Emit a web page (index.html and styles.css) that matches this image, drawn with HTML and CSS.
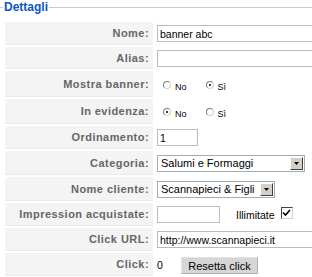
FILE: index.html
```html
<!DOCTYPE html>
<html lang="it">
  <head>
    <meta charset="utf-8" />
    <title>Banner - Dettagli</title>
    <link rel="stylesheet" href="styles.css">
  </head>
  <body>
    <fieldset class="adminform">
      <legend>Dettagli</legend>
      <div class="admintable">
        <div class="key">Nome:</div>
        <div class="val"><input class="inputbox wide" type="text" value="banner abc" /></div>

        <div class="key">Alias:</div>
        <div class="val"><input class="inputbox wide" type="text" value="" /></div>

        <div class="key">Mostra banner:</div>
        <div class="val radios">
          <span class="radio"></span><span class="radio-label">No</span>
          <span class="radio checked"></span><span class="radio-label">Sì</span>
        </div>

        <div class="key">In evidenza:</div>
        <div class="val radios">
          <span class="radio checked"></span><span class="radio-label">No</span>
          <span class="radio"></span><span class="radio-label">Sì</span>
        </div>

        <div class="key">Ordinamento:</div>
        <div class="val"><input class="inputbox small" type="text" value="1" /></div>

        <div class="key">Categoria:</div>
        <div class="val">
          <div class="select select-cat">
            <span class="select-text">Salumi e Formaggi</span>
            <span class="select-btn"><svg width="5" height="3" viewBox="0 0 5 3"><path d="M0 0h5L2.5 3z" fill="#000"/></svg></span>
          </div>
        </div>

        <div class="key">Nome cliente:</div>
        <div class="val">
          <div class="select select-client">
            <span class="select-text">Scannapieci &amp; Figli</span>
            <span class="select-btn"><svg width="5" height="3" viewBox="0 0 5 3"><path d="M0 0h5L2.5 3z" fill="#000"/></svg></span>
          </div>
        </div>

        <div class="key">Impression acquistate:</div>
        <div class="val">
          <input class="inputbox imp" type="text" value="" />
          <span class="unlimited">Illimitate</span>
          <span class="checkbox"><svg width="9" height="8" viewBox="0 0 9 8"><path d="M1 3.5l2.5 2.5L8 1" fill="none" stroke="#000" stroke-width="1.6"/></svg></span>
        </div>

        <div class="key">Click URL:</div>
        <div class="val"><input class="inputbox wide" type="text" value="http://www.scannapieci.it" /></div>

        <div class="key">Click:</div>
        <div class="val">
          <span class="clicks">0</span>
          <button class="button" type="button">Resetta click</button>
        </div>
      </div>
    </fieldset>
  </body>
</html>
```
FILE: styles.css
```css
html, body {
  margin: 0;
  background: #ffffff;
}

body {
  font-family: "Liberation Sans", Arial, sans-serif;
  font-size: 10.5px;
  overflow: hidden;
}

fieldset.adminform {
  margin: 0 0 0 -1px;
  padding: 0 0 10px 5px;
  border: 1px solid #cccccc;
  border-right: none;
  min-width: 0;
}

fieldset.adminform legend {
  margin-left: -2px;
  padding: 0 1px;
  color: #0b55c4;
  font-size: 12px;
  font-weight: bold;
  line-height: 14px;
}

.admintable {
  display: grid;
  grid-template-columns: 148px minmax(0, 1fr);
  grid-template-rows: 23px 22px 26px 25px 23px 24px 24px 23px 23px 23px;
  column-gap: 4px;
  row-gap: 2px;
  margin-top: 8px;
}

.key {
  display: flex;
  align-items: center;
  justify-content: flex-end;
  padding-right: 4px;
  background-color: #f4f4f4;
  border-bottom: 1px solid #e9e9e9;
  color: #666666;
  font-size: 11px;
  font-weight: bold;
  letter-spacing: 0.45px;
  white-space: nowrap;
}

.val {
  display: flex;
  align-items: center;
  color: #000000;
  white-space: nowrap;
  overflow: hidden;
}

.inputbox {
  box-sizing: border-box;
  flex: none;
  height: 17px;
  margin: 0;
  padding: 0 2px;
  border: 1px solid #bbbbbb;
  font-family: "Liberation Sans", Arial, sans-serif;
  font-size: 10.5px;
  color: #000000;
  background: #ffffff;
  outline: none;
}

.wide {
  width: 200px;
}

.small {
  width: 41px;
}

.imp {
  width: 63px;
}

.radios {
  padding-top: 1px;
}

.radio {
  box-sizing: border-box;
  display: inline-flex;
  align-items: center;
  justify-content: center;
  width: 8px;
  height: 8px;
  margin-left: 6px;
  border-radius: 50%;
  border: 1px solid #808080;
  border-right-color: #d4d0c8;
  border-bottom-color: #d4d0c8;
  background: #ffffff;
}

.radio + .radio-label + .radio {
  margin-left: 19px;
}

.radio.checked::after {
  content: "";
  width: 2px;
  height: 2px;
  background: #000000;
  border-radius: 50%;
}

.radio-label {
  margin-left: 4px;
  padding-top: 4px;
  font-size: 9px;
}

.select {
  box-sizing: border-box;
  display: flex;
  align-items: center;
  height: 17px;
  border: 1px solid #a5acb2;
  background: #ffffff;
}

.select-cat {
  width: 148px;
}

.select-client {
  width: 118px;
}

.select-text {
  flex: 1;
  padding-left: 3px;
  font-size: 11px;
}

.select-btn {
  box-sizing: border-box;
  display: flex;
  align-items: center;
  justify-content: center;
  width: 13px;
  height: 13px;
  margin-right: 1px;
  background: #d4d0c8;
  border: 1px solid #ffffff;
  border-right-color: #404040;
  border-bottom-color: #404040;
}

.unlimited {
  margin-left: 16px;
}

.checkbox {
  box-sizing: border-box;
  display: inline-flex;
  align-items: center;
  justify-content: center;
  width: 12px;
  height: 12px;
  margin-left: 6px;
  margin-top: -4px;
  border: 1px solid #404040;
  border-right-color: #d4d0c8;
  border-bottom-color: #d4d0c8;
  background: #ffffff;
}

.clicks {
  width: 24px;
}

.button {
  box-sizing: border-box;
  width: 77px;
  height: 17px;
  margin: 2px 0 0 0;
  padding: 0;
  border: 1px solid #e4e4e4;
  border-right-color: #b0b0b0;
  border-bottom-color: #b0b0b0;
  background: #d6d6d6;
  font-family: "Liberation Sans", Arial, sans-serif;
  font-size: 11px;
  color: #000000;
}
```
